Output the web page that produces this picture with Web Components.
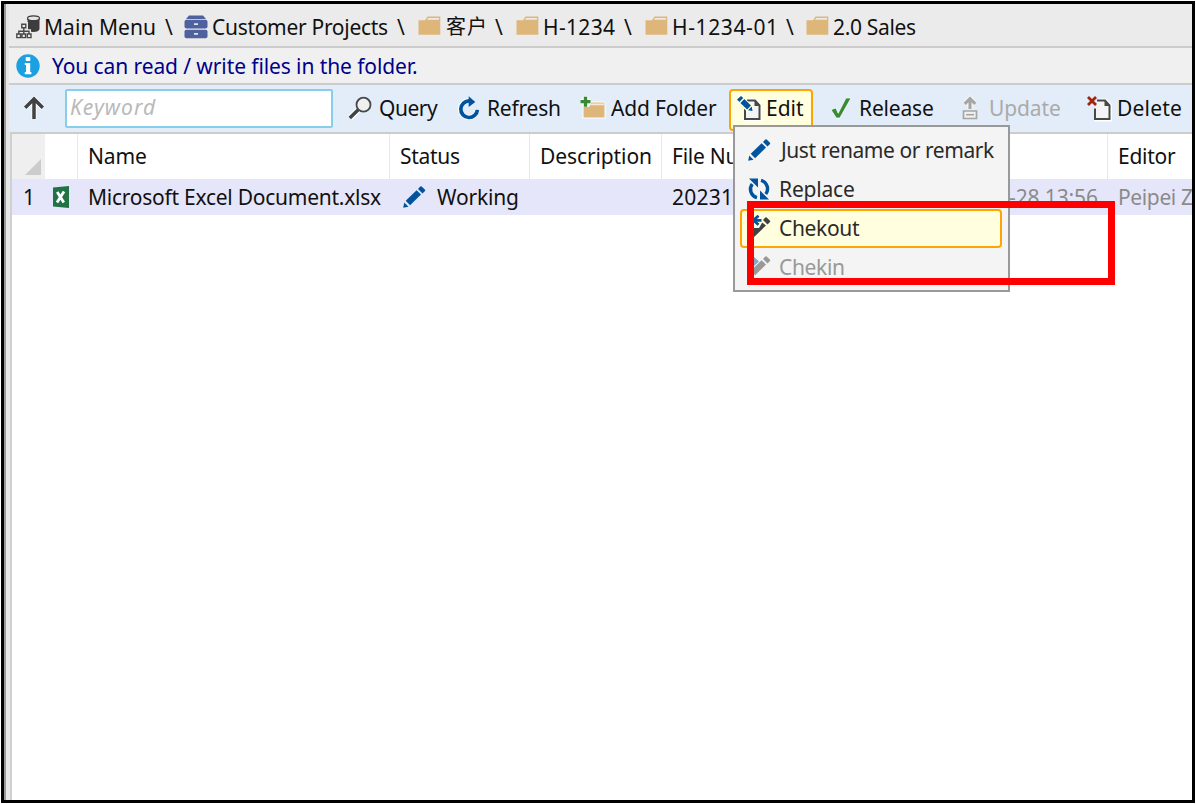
<!DOCTYPE html>
<html lang="en">
<head>
<meta charset="utf-8">
<title>Customer Projects</title>
<style>
html,body{margin:0;height:100%;overflow:hidden;background:#fff}
body{font:21px "Noto Sans","Noto Sans CJK SC",sans-serif;color:#111}
</style>
</head>
<body>
<file-window></file-window>
<script>
const FAMILY = '"Noto Sans","Noto Sans CJK SC",sans-serif';
const pen = document.createElement('canvas').getContext('2d');

// A label whose ink fills the width given in "w".
customElements.define('fit-text', class extends HTMLElement {
  connectedCallback() {
    if (this.shadowRoot) return;
    const size = this.getAttribute('size') || 21, italic = this.hasAttribute('italic') ? 'italic ' : '';
    const text = this.textContent, w = +this.getAttribute('w');
    pen.font = `${italic}${size}px ${FAMILY}`;
    const m = pen.measureText(text);
    const ink = m.actualBoundingBoxLeft + m.actualBoundingBoxRight;
    const ls = text.length > 1 ? (w - ink) / (text.length - 1) : 0;
    this.attachShadow({mode: 'open'}).innerHTML = `<style>
      :host{display:block;flex:none;width:${w}px;white-space:pre;line-height:30px;
        font:${italic}${size}px/30px ${FAMILY};letter-spacing:${ls}px;text-indent:${m.actualBoundingBoxLeft}px}
    </style><slot></slot>`;
  }
});

const doc = `<path d="M9.5 11V23.5H23V9.5L18.5 4.5H12" fill="#f4f4f4" stroke="#fff" stroke-width="4"/><path d="M8 12.5V23H22.5V9.5L18 4.5H10" fill="#f4f4f4" stroke="#484848" stroke-width="2"/><path d="M17.5 4V10H23Z" fill="#484848"/>`;
const pencil = (c) => `<g fill="${c}"><path d="M1.2 22.8 2.3 17.5 6.5 21.7Z"/><path d="M3.7 15.8 14.6 5.2 19 9.5 8.1 20.2Z"/><path d="M16 3.9 18.3 1.6Q19 1 19.7 1.6L23 4.8Q23.5 5.5 23 6L20.5 8.4Z"/></g>`;
const ICONS = {
  tree: `<path d="M11.5 3V14Q12.5 17 17 17Q23 17 23.5 14V3Z" fill="#3d3d3d"/><ellipse cx="17.5" cy="3.3" rx="6" ry="2.4" fill="#e4e4e4" stroke="#3d3d3d" stroke-width="1.2"/><g fill="none" stroke="#ebebeb" stroke-width="4"><path d="M5.5 9H10V13H5.5ZM8 13V16M3 19V16.3H13V19"/></g><g fill="#ebebeb" stroke="#484848" stroke-width="1.4"><path d="M5.8 9.2H9.8V12.8H5.8Z"/><path d="M7.8 13V19M2.8 19V16.2H13V19" fill="none"/><path d="M.8 19H4.5V22.6H.8ZM6 19H9.5V22.6H6ZM11.3 19H15V22.6H11.3Z"/></g>`,
  cabinet: `<g fill="#4f629e"><path d="M5 .5H19L22 4H2Z"/><rect x=".5" y="4.8" width="23" height="8.8" rx="2"/><path d="M.5 16.5Q.5 14.8 2.5 14.8H21.5Q23.5 14.8 23.5 16.5V21.5Q23.5 23.3 21.5 23.3H2.5Q.5 23.3.5 21.5Z"/></g><path d="M10 9.2H14M10 18.8H14" stroke="#dfe3f0" stroke-width="1.8"/>`,
  folder: `<path d="M.5 5.2H7L9.5 1.5H22.3V19.8H.5Z" fill="#deb67a"/><path d="M8.3 5.4 10.2 3H21V4.7H8.7" fill="#ebebeb"/>`,
  info: `<circle cx="12" cy="12" r="11.7" fill="#1ba1e2"/><g fill="#fff"><rect x="9.7" y="3" width="4.6" height="4" rx=".8"/><path d="M8.8 9H14.2V18H15.4V20.3H8.8V18H10V11H8.8Z"/></g>`,
  up: `<path d="M12 23V3M3.2 12 12 3 20.8 12" fill="none" stroke="#fff" stroke-width="5"/><path d="M12 23V3M3.2 11.8 12 3 20.8 11.8" fill="none" stroke="#424242" stroke-width="3.5"/>`,
  query: `<path d="M2 22 11 13" stroke="#fff" stroke-width="6"/><path d="M1.8 22 11 13" stroke="#424242" stroke-width="3.5"/><circle cx="15.5" cy="8.7" r="7" fill="#f0f0f0" stroke="#484848" stroke-width="1.8"/>`,
  refresh: `<path d="M11 4.6A8.5 8.5 0 1 0 20.3 14" fill="none" stroke="#fff" stroke-width="5"/><path d="M12.5 4.9A8.3 8.3 0 1 0 20.4 13.8" fill="none" stroke="#00539c" stroke-width="3.7"/><path d="M11.7.3 18.3 6 11.7 11Z" fill="#00539c"/>`,
  add: `<path d="M3 10.5H9L11 6H25V22H3Z" fill="#deb67a" stroke="#fff"/><path d="M10.5 9 11.5 7.5H24V9.3H10.5" fill="#f5ebdc"/><path d="M5.5.5V11M.3 5.7H10.7" stroke="#f5f9f5" stroke-width="6"/><path d="M5.5.7V10.7M.5 5.7H10.5" stroke="#388a34" stroke-width="3.3"/>`,
  edit: doc + `<path d="M2 2 14 14" stroke="#ffffe0" stroke-width="8"/><g fill="#00539c"><path d="M0 3.5 4 0 6.2 2.1 2.4 6Z"/><path d="M3.4 7 7.3 3 14 9.6 10.1 13.6Z"/><path d="M14.7 10.5 15.5 15 11 14.2Z"/></g>`,
  check: `<path d="M2 13.7 6.8 12 9.2 17.3 17 2H22L10.8 22H7.3Z" fill="#388a34" stroke="#fff" stroke-width=".7"/>`,
  update: `<path d="M12 13V3M6.5 8.2 12 2.7 17.5 8.2" fill="none" stroke="#f1f1f1" stroke-width="6"/><path d="M12 13V3M6.7 7.8 12 2.7 17.3 7.8" fill="none" stroke="#a5a5a5" stroke-width="3"/><path d="M5.5 15H18.5V22.5H5.5Z" fill="#f1f1f1" stroke="#a5a5a5" stroke-width="1.7"/><path d="M8 18.7H16" stroke="#a5a5a5" stroke-width="1.6"/>`,
  delete: doc + `<path d="M0 0H10V11H0Z" fill="#e3edfa"/><path d="M1 1 9 9M9 1 1 9" stroke="#a1260d" stroke-width="2.8"/>`,
  excel: `<path d="M1 2.5 17 1V23L1 21.5Z" fill="#217346"/><path d="M5.2 7 11.8 17.5M12 6.5 5 17.5" stroke="#fff" stroke-width="2.8"/>`,
  pencil: pencil('#00539c'),
  replace: `<g fill="none" stroke="#00539c" stroke-width="3.4"><path d="M10 20.6A8.7 8.7 0 0 1 5.2 7"/><path d="M14 3.4A8.7 8.7 0 0 1 18.8 17"/></g><g fill="#00539c"><path d="M2 1.5H11V10.5Z"/><path d="M22 22.5H13V13.5Z"/></g>`,
  checkout: `<g fill="#424242"><path d="M16 3.9 18.3 1.6Q19 1 19.7 1.6L23 4.8Q23.5 5.5 23 6L20.5 8.4Z"/><path d="M4 12H12L15.2 6.5 19 9.5 6 22Z"/></g><path d="M15.2 4.3H3M11.8-.5 6.5 4.3 11.8 9.2" fill="none" stroke="#ffffe0" stroke-width="5"/><path d="M14.5 4.3H3M11.5-.2 6.5 4.3 11.5 8.8" fill="none" stroke="#00539c" stroke-width="2.8"/>`,
  checkin: pencil('#999') + `<path d="M6 1 12 6.5 6 12Z" fill="#7fa9cd"/>`
};
customElements.define('ui-icon', class extends HTMLElement {
  connectedCallback() {
    if (this.shadowRoot) return;
    const w = this.getAttribute('w') || 24, box = this.getAttribute('box') || 24;
    this.attachShadow({mode: 'open'}).innerHTML = `<style>
      :host{display:block;flex:none;width:${w}px;height:24px}svg{display:block;overflow:visible}
    </style><svg width="${w}" height="24" viewBox="0 0 ${box} 24">${ICONS[this.getAttribute('name')]}</svg>`;
  }
});

// Icon followed by a label; "gap" is the space between the two.
customElements.define('icon-label', class extends HTMLElement {
  connectedCallback() {
    if (this.shadowRoot) return;
    const a = (n, d) => this.getAttribute(n) || d, iw = a('iw', 24);
    this.attachShadow({mode: 'open'}).innerHTML = `<style>
      :host{display:flex;flex:none;align-items:center;gap:${a('gap', 6)}px;box-sizing:border-box}
      :host([disabled]){color:#aaa}
      :host([active]){height:42px;padding:0 7px 4px 6px;margin:0 0 -4px;background:#ffffe0;border:2px solid #ffa500;border-radius:4px}
    </style><ui-icon name="${a('icon')}" w="${iw}" box="${iw}"></ui-icon><fit-text w="${a('w')}" size="${a('size', 21)}">${this.textContent}</fit-text>`;
  }
});

customElements.define('path-bar', class extends HTMLElement {
  connectedCallback() {
    this.attachShadow({mode: 'open'}).innerHTML = `<style>
      :host{display:flex;align-items:center;height:44px;box-sizing:border-box;padding:4px 0 0 7px;background:#ebebeb;border-bottom:2px solid #ccc}
    </style>
    <icon-label icon="tree" w="109">Main Menu</icon-label>
    <fit-text w="9" style="margin:0 10px 0 10px">\\</fit-text>
    <icon-label icon="cabinet" w="175" gap="5">Customer Projects</icon-label>
    <fit-text w="9" style="margin:0 12px 0 9px">\\</fit-text>
    <icon-label icon="folder" w="38" size="20" gap="4">客户</icon-label>
    <fit-text w="9" style="margin:0 12px 0 11px">\\</fit-text>
    <icon-label icon="folder" w="70" gap="5">H-1234</icon-label>
    <fit-text w="9" style="margin:0 12px 0 9px">\\</fit-text>
    <icon-label icon="folder" w="100" gap="5">H-1234-01</icon-label>
    <fit-text w="9" style="margin:0 11px 0 12px">\\</fit-text>
    <icon-label icon="folder" w="82" gap="4">2.0 Sales</icon-label>`;
  }
});

customElements.define('info-bar', class extends HTMLElement {
  connectedCallback() {
    this.attachShadow({mode: 'open'}).innerHTML = `<style>
      :host{display:flex;align-items:center;height:37px;box-sizing:border-box;padding-left:7px;background:#f0f0f0;border-bottom:2px solid #ccc;color:#00008b}
    </style><icon-label icon="info" w="365" gap="12">You can read / write files in the folder.</icon-label>`;
  }
});

customElements.define('tool-bar', class extends HTMLElement {
  connectedCallback() {
    this.attachShadow({mode: 'open'}).innerHTML = `<style>
      :host{display:flex;align-items:center;height:47px;box-sizing:border-box;padding:0 0 1px 13px;background:#e3edfa}
      .field{display:flex;align-items:center;box-sizing:border-box;width:268px;height:39px;margin:1px 15px 0 19px;padding:0 0 4px 4px;background:#fff;border:2px solid #87ceeb;border-radius:2px;color:#b9b9b9}
    </style>
    <ui-icon name="up"></ui-icon>
    <div class="field"><fit-text w="86" italic size="21" style="margin-left:-1px">Keyword</fit-text></div>
    <icon-label icon="query" w="58" gap="8">Query</icon-label>
    <icon-label icon="refresh" w="71" gap="8" style="margin-left:19px">Refresh</icon-label>
    <icon-label icon="add" iw="26" w="106" gap="5" style="margin-left:20px">Add Folder</icon-label>
    <icon-label active icon="edit" w="36" gap="7" style="margin-left:12px">Edit</icon-label>
    <icon-label icon="check" w="72" gap="8" style="margin-left:16px">Release</icon-label>
    <icon-label disabled icon="update" w="70" gap="8" style="margin-left:25px">Update</icon-label>
    <icon-label icon="delete" w="62" gap="8" style="margin-left:27px">Delete</icon-label>`;
  }
});

customElements.define('file-table', class extends HTMLElement {
  connectedCallback() {
    this.attachShadow({mode: 'open'}).innerHTML = `<style>
      :host{display:block;flex:1;box-sizing:border-box;background:#fff;border-top:2px solid #ccc;border-left:2px solid #d0d0d0}
      .row{display:grid;grid-template-columns:33px 33px 312px 140px 132px 446px 1fr;overflow:hidden}
      .row>div{display:flex;align-items:center;min-width:0;box-sizing:border-box;padding-left:12px}
      .head{height:45px}
      .head>div{border-right:1px solid #e8e8e8;padding-bottom:1px}
      .head>.corner{background:#efefef;border:0;padding:0 4px 4px 0;align-items:flex-end;justify-content:flex-end}
      .corner i{width:0;height:0;border-left:16px solid transparent;border-bottom:16px solid #ccc}
      .head>div:last-child{border:0}
      .data{height:36px;background:#e6e6fa}
      .soft{color:#8b8b8b}
    </style>
    <div class="row head"><div class="corner"><i></i></div><div></div>
      <div><fit-text w="56">Name</fit-text></div>
      <div style="padding-left:11px"><fit-text w="59">Status</fit-text></div>
      <div><fit-text w="109">Description</fit-text></div>
      <div><fit-text w="117">File Number</fit-text></div>
      <div><fit-text w="56">Editor</fit-text></div></div>
    <div class="row data"><div><fit-text w="7">1</fit-text></div>
      <div style="padding-left:7px"><ui-icon name="excel" w="18" box="18"></ui-icon></div>
      <div><fit-text w="291">Microsoft Excel Document.xlsx</fit-text></div>
      <div><icon-label icon="pencil" w="81" gap="11">Working</icon-label></div>
      <div></div>
      <div style="padding-left:11px"><fit-text w="56">20231</fit-text><fit-text class="soft" w="166" style="margin-left:203px">2023-11-28 13:56</fit-text></div>
      <div class="soft"><fit-text w="73">Peipei Z</fit-text></div></div>`;
  }
});

customElements.define('edit-menu', class extends HTMLElement {
  connectedCallback() {
    this.attachShadow({mode: 'open'}).innerHTML = `<style>
      :host{display:block;box-sizing:border-box;width:277px;height:167px;padding:4px 6px 0 5px;background:#f4f4f4;border:2px solid #999;color:#2a2a2a}
      div{display:flex;align-items:center;height:39px;box-sizing:border-box;border:2px solid transparent;padding:0 0 2px 5px;border-radius:4px}
      .on{background:#ffffe0;border-color:#ffa500}.off{color:#999}
    </style>
    <div><icon-label icon="pencil" w="216" gap="8">Just rename or remark</icon-label></div>
    <div><icon-label icon="replace" w="73" gap="10">Replace</icon-label></div>
    <div class="on"><icon-label icon="checkout" w="80" gap="9">Chekout</icon-label></div>
    <div class="off"><icon-label icon="checkin" w="64" gap="9">Chekin</icon-label></div>`;
  }
});

customElements.define('file-window', class extends HTMLElement {
  connectedCallback() {
    this.attachShadow({mode: 'open'}).innerHTML = `<style>
      :host{display:flex;position:relative;box-sizing:border-box;width:1194px;height:802px;margin:1px 0 0 1px;border:3px solid #000;background:#e6e6e6;overflow:hidden}
      .edge{flex:none;width:2px;background:#999}
      main{flex:1;min-width:0;display:flex;flex-direction:column;padding-left:4px}
      path-bar,info-bar,tool-bar{flex:none;margin-left:-1px;padding-right:0}
      edit-menu{position:absolute;left:729px;top:121px}
      .mark{position:absolute;left:743px;top:197px;width:368px;height:84px;box-sizing:border-box;border:7px solid #f00}
    </style>
    <div class="edge"></div>
    <main><path-bar></path-bar><info-bar></info-bar><tool-bar></tool-bar><file-table></file-table></main>
    <edit-menu></edit-menu><div class="mark"></div>`;
  }
});
</script>
</body>
</html>
